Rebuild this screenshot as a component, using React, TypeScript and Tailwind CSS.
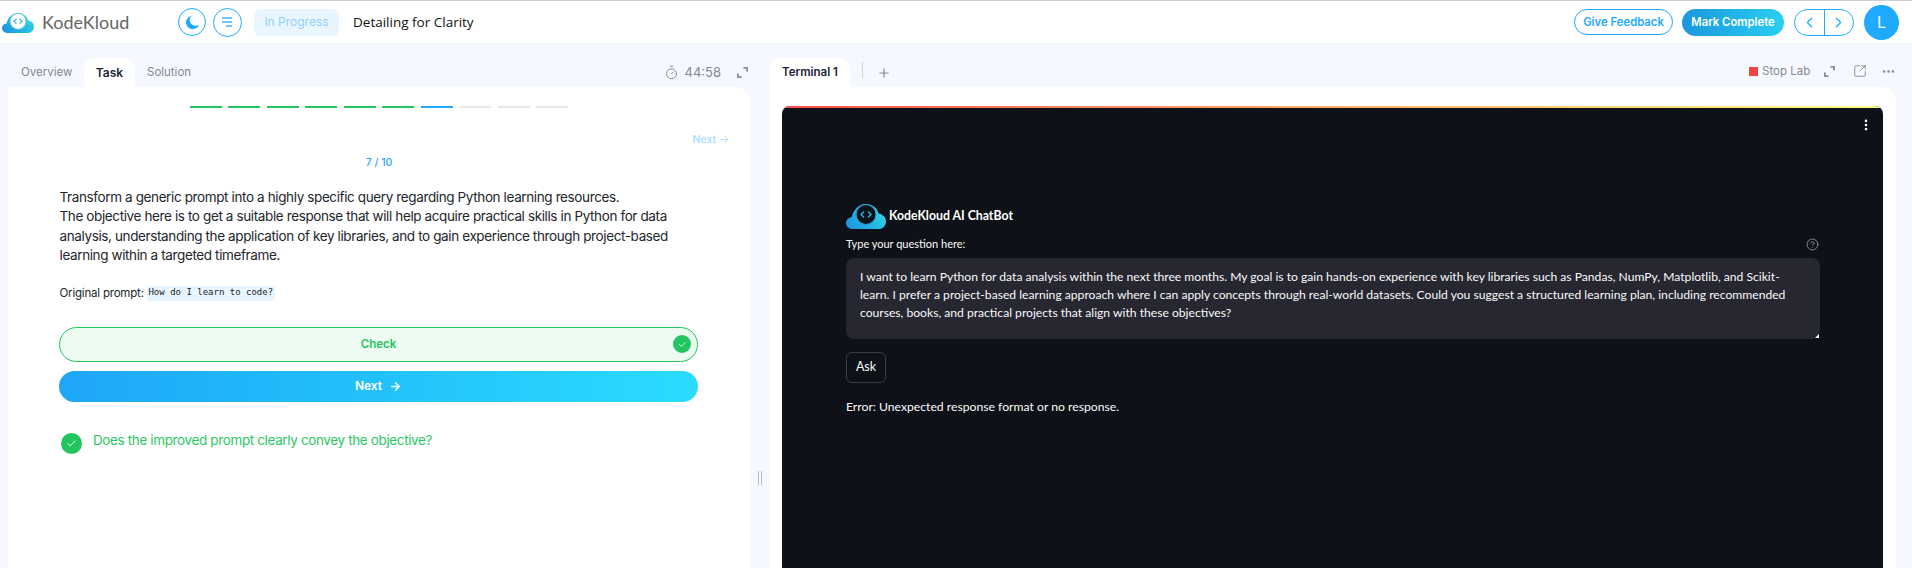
import { ArrowRight, Check, ChevronLeft, ChevronRight, CircleHelp, Ellipsis, EllipsisVertical, Plus, SquareArrowOutUpRight, Timer } from 'lucide-react';

const dashes = [
    'bg-[#22c55e]', 'bg-[#22c55e]', 'bg-[#22c55e]', 'bg-[#22c55e]', 'bg-[#22c55e]', 'bg-[#22c55e]',
    'bg-[#1fa9ff]', 'bg-[#e8e8e8]', 'bg-[#e8e8e8]', 'bg-[#e8e8e8]',
];

const Cloud = ({ dark, className }: { dark?: boolean; className: string }) => (
    <svg viewBox="0 0 40 26" className={className}>
        <defs>
            <linearGradient id={dark ? 'cloudDark' : 'cloudLight'} x1="0" y1="1" x2="1" y2="0.4">
                <stop offset="0" stopColor="#1c8fe0" />
                <stop offset="1" stopColor="#2fd6e6" />
            </linearGradient>
        </defs>
        <path
            d="M6.500 26C2.800 26 0 23.400 0 20.200 0 17 2.400 14.600 5.600 14.200 7 8 12 1 20 1c6.200 0 11 3.600 12.600 9.400C36.800 11 40 14.200 40 18.400 40 22.800 36.800 26 32.600 26Z"
            fill={`url(#${dark ? 'cloudDark' : 'cloudLight'})`}
        />
        <circle cx="20" cy="11.500" r="10" fill={dark ? '#0e1117' : '#ffffff'} stroke={dark ? '#1f9fd8' : '#59c9ef'} strokeWidth="1.200" />
        <path d="M18 8.500 15 11.500 18 14.500M22 8.500 25 11.500 22 14.500" fill="none" stroke={dark ? '#27b6e0' : '#2aa8ee'} strokeWidth="1.400" />
    </svg>
);

const Expand = () => (
    <svg viewBox="0 0 12 12" className="h-[11px] w-[11px] fill-[#8a8f98]">
        <path d="M7 0h5v5h-2V2H7ZM0 7h2v3h3v2H0Z" />
    </svg>
);

const Header = () => (
    <header className="flex h-[44px] shrink-0 items-center border-b border-[#eef0f3] border-t border-t-[#cfcfcf] bg-white">
        <Cloud className="ml-[2px] h-[21px] w-[32px]" />
        <span className="ml-[8px] w-[104px] text-[18px] text-[#666] [font-family:Lato,sans-serif]">KodeKloud</span>
        <button className="ml-[32px] flex h-[28px] w-[28px] items-center justify-center rounded-full border border-[#1fa9ff]">
            <svg viewBox="0 0 24 24" className="h-[17px] w-[17px] fill-[#1fa9ff]">
                <path d="M12 2.500a9.500 9.500 0 1 0 9.500 11.800A8 8 0 0 1 10 3.200Q11 2.500 12 2.500Z" />
            </svg>
        </button>
        <button className="ml-[7px] flex h-[29px] w-[29px] flex-col items-end justify-center gap-[2.500px] rounded-full border border-[#1fa9ff] pr-[9px]">
            <span className="h-[1.500px] w-[10px] bg-[#6cc7ff]" />
            <span className="h-[1.500px] w-[10px] bg-[#6cc7ff]" />
            <span className="h-[1.500px] w-[6px] bg-[#6cc7ff]" />
        </button>
        <span className="ml-[12px] flex h-[27px] w-[85px] items-center justify-center rounded-[6px] bg-[#eaf6ff] text-[12px] text-[#8fd0fd] [font-family:Inter,sans-serif]">In Progress</span>
        <span className="ml-[14px] text-[13.500px] text-[#111] [font-family:'Open_Sans',sans-serif]">Detailing for Clarity</span>
        <div className="ml-auto flex items-center">
            <button className="h-[26px] w-[99px] rounded-full border border-[#1fa9ff] text-[11.300px] font-semibold text-[#1fa9ff] [font-family:Inter,sans-serif]">Give Feedback</button>
            <button className="ml-[9px] h-[27px] w-[102px] rounded-full bg-gradient-to-r from-[#1c97dd] to-[#2acff0] text-[11.300px] font-semibold text-white [font-family:Inter,sans-serif]">Mark Complete</button>
            <div className="ml-[10px] flex h-[27px] w-[60px] rounded-full border border-[#1fa9ff]">
                <span className="flex flex-1 items-center justify-center border-r border-[#1fa9ff]"><ChevronLeft size={17} strokeWidth={1.700} className="text-[#1fa9ff]" /></span>
                <span className="flex flex-1 items-center justify-center"><ChevronRight size={17} strokeWidth={1.700} className="text-[#1fa9ff]" /></span>
            </div>
            <span className="ml-[10px] mr-[13px] flex h-[35px] w-[35px] items-center justify-center rounded-full bg-[#1fa9ff] text-[16px] text-white [font-family:Inter,sans-serif]">L</span>
        </div>
    </header>
);

const TaskPanel = () => (
    <section className="flex w-[750px] shrink-0 flex-col pl-[8px]">
        <div className="flex h-[43px] shrink-0 items-end text-[12px] [font-family:Inter,sans-serif]">
            <span className="flex h-[29px] w-[76px] items-center pl-[13px] text-[11.500px] text-[#85888e]">Overview</span>
            <span className="flex h-[29px] w-[51px] items-center justify-center rounded-t-[10px] bg-white font-semibold text-[#1b2433]">Task</span>
            <span className="flex h-[29px] items-center pl-[12px] text-[11.500px] text-[#85888e]">Solution</span>
            <span className="ml-auto flex h-[29px] items-center text-[#85888e]">
                <Timer size={15} strokeWidth={1.500} />
                <span className="ml-[6px] text-[13px]">44:58</span>
                <span className="ml-[16px] mr-[2px]"><Expand /></span>
            </span>
        </div>
        <div className="flex flex-1 flex-col rounded-tr-[14px] bg-white pt-[19px] [font-family:Inter,sans-serif]">
            <div className="flex justify-center gap-[6.500px]">
                {dashes.map((color, i) => (
                    <span key={i} className={`h-[2px] w-[32px] ${color}`} />
                ))}
            </div>
            <div className="mt-[24px] flex items-center justify-end pr-[20px] text-[10.500px] font-medium text-[#a9ddff]">
                Next <ArrowRight size={11} className="ml-[3px]" />
            </div>
            <div className="mt-[7px] text-center text-[10.500px] font-medium text-[#1fa9ff]">7 / 10</div>
            <p className="mt-[17px] ml-[51.500px] w-[640px] text-[13.500px] leading-[19.500px] tracking-[-0.38px] text-[#22262c]">
                Transform a generic prompt into a highly specific query regarding Python learning resources.<br />
                The objective here is to get a suitable response that will help acquire practical skills in Python for data analysis, understanding the application of key libraries, and to gain experience through project-based learning within a targeted timeframe.
            </p>
            <div className="mt-[19px] ml-[51.500px] flex items-center text-[11.500px] tracking-[-0.2px] text-[#22262c]">
                Original prompt:
                <code className="ml-[3px] flex h-[15px] w-[128px] items-center justify-center whitespace-nowrap rounded-[2px] bg-[#e8f5ff] text-[9px] tracking-normal text-[#222] [font-family:'DejaVu_Sans_Mono',monospace]">How do I learn to code?</code>
            </div>
            <button className="relative mt-[25px] ml-[51px] flex h-[35px] w-[639px] items-center justify-center rounded-full border border-[#22c55e] bg-[#edfbf2] text-[11.500px] font-semibold text-[#22c55e]">
                Check
                <span className="absolute right-[6px] flex h-[18px] w-[18px] items-center justify-center rounded-full bg-[#22c55e]"><Check size={9} className="text-white" /></span>
            </button>
            <button className="mt-[9px] ml-[51px] flex h-[31px] w-[639px] items-center justify-center gap-[7px] rounded-full bg-gradient-to-r from-[#1fa6f7] to-[#2bdcff] text-[12px] font-semibold text-white">
                Next <ArrowRight size={13} strokeWidth={2.500} />
            </button>
            <div className="mt-[27px] ml-[53px] flex items-start">
                <span className="mt-[4px] flex h-[21px] w-[21px] items-center justify-center rounded-full bg-[#22c55e]"><Check size={11} className="text-white" /></span>
                <span className="ml-[11px] mt-[1px] text-[13.500px] tracking-[-0.37px] text-[#2cc766]">Does the improved prompt clearly convey the objective?</span>
            </div>
        </div>
    </section>
);

const TerminalPanel = () => (
    <section className="flex flex-1 flex-col pr-[16px]">
        <div className="flex h-[43px] shrink-0 items-end text-[12px] [font-family:Inter,sans-serif]">
            <span className="flex h-[29px] w-[80px] items-center justify-center rounded-t-[10px] bg-white text-[11.500px] font-semibold text-[#1b2433]">Terminal 1</span>
            <span className="mb-[9px] ml-[12px] h-[16px] w-px bg-[#d0d4da]" />
            <Plus size={14} className="mb-[7px] ml-[14px] text-[#85888e]" />
            <div className="mb-[7px] ml-auto flex items-center text-[#85888e]">
                <span className="h-[9px] w-[9px] bg-[#ef4444]" />
                <span className="ml-[4px] w-[62px] text-[11.500px]">Stop Lab</span>
                <Expand />
                <SquareArrowOutUpRight size={14} strokeWidth={1.500} className="ml-[18px]" />
                <Ellipsis size={15} className="ml-[14px]" />
            </div>
        </div>
        <div className="flex-1 rounded-tr-[14px] bg-white pl-[12px] pr-[13px] pt-[19px]">
            <div className="h-[600px] overflow-hidden rounded-t-[8px] bg-[#0e1117] [font-family:Lato,sans-serif]">
                <div className="h-[2px] bg-gradient-to-r from-[#ff4b4b] to-[#fffd80]" />
                <div className="flex justify-end pr-[10px] pt-[10px]">
                    <EllipsisVertical size={14} strokeWidth={2.500} className="text-white" />
                </div>
                <div className="ml-[64px] mt-[71px] w-[974px]">
                    <div className="flex items-center">
                        <Cloud dark className="h-[26px] w-[40px]" />
                        <span className="ml-[3px] text-[12.300px] font-bold text-white">KodeKloud AI ChatBot</span>
                    </div>
                    <div className="mt-[6px] flex h-[19px] items-center justify-between text-[11px] text-[#fafafa]">
                        Type your question here:
                        <CircleHelp size={13} strokeWidth={1.500} className="mr-[1px] text-[#a0a2a8]" />
                    </div>
                    <div className="relative mt-[4px] h-[81px] rounded-[8px] bg-[#262730] pl-[14px] pr-[16px] pt-[10px] text-[12.130px] leading-[18px] text-[#fafafa]">
                        I want to learn Python for data analysis within the next three months. My goal is to gain hands-on experience with key libraries such as Pandas, NumPy, Matplotlib, and Scikit-learn. I prefer a project-based learning approach where I can apply concepts through real-world datasets. Could you suggest a structured learning plan, including recommended courses, books, and practical projects that align with these objectives?
                        <span className="absolute bottom-[1px] right-[1px] h-0 w-0 border-b-[4px] border-l-[4px] border-b-white border-l-transparent" />
                    </div>
                    <button className="mt-[13px] h-[31px] w-[40px] rounded-[6px] border border-[#3a3c45] text-[12.500px] text-[#fafafa]">Ask</button>
                    <p className="mt-[15px] text-[12.200px] text-[#fafafa]">Error: Unexpected response format or no response.</p>
                </div>
            </div>
        </div>
    </section>
);

export default function App() {
    return (
        <main className="flex h-[568px] flex-col overflow-hidden bg-[#f5f8fe]">
            <Header />
            <div className="flex min-h-0 flex-1">
                <TaskPanel />
                <div className="flex w-[20px] shrink-0 justify-center gap-[2px] pt-[427px]">
                    <span className="h-[14px] w-px bg-[#b9bcc2]" />
                    <span className="h-[14px] w-px bg-[#b9bcc2]" />
                </div>
                <TerminalPanel />
            </div>
        </main>
    );
}
